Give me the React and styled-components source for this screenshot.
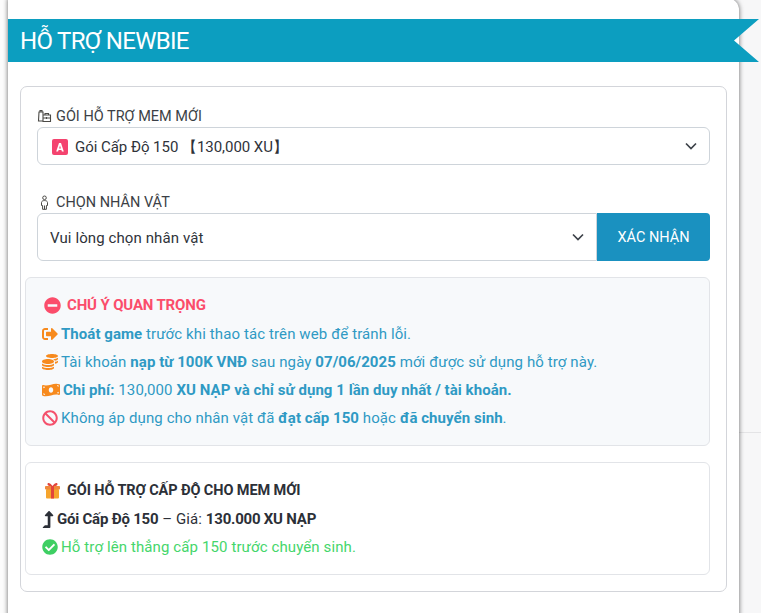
import React from "react";
import styled, { createGlobalStyle } from "styled-components";
import {
  FaSignOutAlt,
  FaCoins,
  FaMoneyBillWave,
  FaBan,
  FaMinusCircle,
  FaCheckCircle,
  FaLevelUpAlt,
} from "react-icons/fa";

const GlobalStyle = createGlobalStyle`
  html, body {
    margin: 0;
    height: 100%;
    overflow: hidden;
    font-family: "Roboto", "Liberation Sans", sans-serif;
    background:
      linear-gradient(to bottom, transparent 432px, #e4e4e6 432px, #e4e4e6 433px, transparent 433px) right top / 22px 100% no-repeat,
      linear-gradient(to right, #fcfcfc 8px, #f7f7f8 8px);
  }
`;

const Panel = styled.div`
  width: 731px;
  height: 640px;
  margin: -2px 0 0 8px;
  padding-top: 21px;
  box-sizing: border-box;
  background: #fff;
  border-radius: 0 12px 0 0;
  box-shadow: 0 0 5px rgba(0, 0, 0, 0.6);
`;

const Ribbon = styled.div`
  width: 751px;
  height: 43px;
  padding-left: 12px;
  box-sizing: border-box;
  display: flex;
  align-items: center;
  background: #0c9ec0;
  color: #fff;
  font-size: 24px;
  letter-spacing: -0.7px;
  clip-path: polygon(0 0, 100% 0, 726px 50%, 100% 100%, 0 100%);
`;

const Card = styled.div`
  margin: 24px 12px 0;
  height: 506px;
  box-sizing: border-box;
  padding: 19px 16px 0 4px;
  border: 1px solid #d3d5da;
  border-radius: 7px;
`;

const Label = styled.div`
  display: flex;
  align-items: center;
  gap: 4px;
  height: 20px;
  margin-left: 12px;
  margin-bottom: 1px;
  color: #3b3f46;
  font-size: 14.5px;
`;

const Select = styled.div`
  flex: 1;
  display: flex;
  align-items: center;
  height: ${(p) => p.$h}px;
  margin-left: 12px;
  padding: 0 12px;
  box-sizing: border-box;
  background: #fff;
  border: 1px solid #ced4da;
  border-radius: ${(p) => (p.$joined ? "6px 0 0 6px" : "6px")};
  color: #2f333a;
  font-size: 15px;
`;

const SelectText = styled.span`
  flex: 1;
  display: flex;
  align-items: center;
  gap: 7px;
  padding-top: 2px;
  margin-left: ${(p) => p.$ml || 0}px;
  letter-spacing: ${(p) => p.$ls || 0}px;
`;

const Row = styled.div`
  display: flex;
  margin-bottom: ${(p) => p.$mb || 0}px;
`;

const Confirm = styled.button`
  width: 113px;
  height: 48px;
  border: 0;
  border-radius: 0 4px 4px 0;
  background: #1a91c0;
  color: #fff;
  font-family: inherit;
  font-size: 14.5px;
`;

const Notice = styled.div`
  height: 169px;
  box-sizing: border-box;
  padding: 17px 18px 0;
  background: #f7f9fb;
  border: 1px solid #e2e4e8;
  border-radius: 6px;
`;

const NoticeTitle = styled.div`
  display: flex;
  align-items: center;
  gap: 6px;
  height: 20px;
  margin-bottom: 5px;
  color: #fb4d6b;
  font-size: 15px;
  font-weight: 700;
  letter-spacing: -0.15px;
`;

const Line = styled.div`
  display: flex;
  align-items: center;
  gap: 3px;
  height: 28px;
  margin-left: -2px;
  color: ${(p) => p.$color || "#2f9ac4"};
  font-size: 15px;
  letter-spacing: 0.11px;
  white-space: pre;

  b {
    font-weight: 700;
    color: inherit;
    letter-spacing: ${(p) => (p.$tight ? "-0.22px" : "0.05px")};
  }
`;

const Plan = styled.div`
  height: 113px;
  margin-top: 16px;
  box-sizing: border-box;
  padding: 17px 18px 0;
  border: 1px solid #e2e4e8;
  border-radius: 6px;
`;

const PlanTitle = styled.div`
  display: flex;
  align-items: center;
  gap: 6px;
  height: 20px;
  margin-bottom: 5px;
  color: #2c3038;
  font-size: 14.5px;
  font-weight: 700;
  letter-spacing: -0.1px;
`;

const LevelUp = styled(FaLevelUpAlt)`
  width: 12px;
  height: 17px;
  color: #2c3038;
`;

const Chevron = () => (
  <svg width="12" height="8" viewBox="0 0 12 8" fill="none" stroke="#3d4249" strokeWidth="1.7">
    <path d="M1 1.5l5 5 5-5" />
  </svg>
);

const BagsIcon = () => (
  <svg width="15" height="14" viewBox="0 0 15 14" fill="none" stroke="#4b4a46" strokeWidth="1.1">
    <path d="M2 3h4v9H1.500zM6 6h7.500v6.500H6zM3 3V1.500h2V3M8 6V4.500h3.500V6" />
    <path d="M6 9h7.500M9.500 8v2" />
  </svg>
);

const PersonIcon = () => (
  <svg width="15" height="15" viewBox="0 0 15 15" fill="none" stroke="#4b4a46" strokeWidth="1">
    <circle cx="7.500" cy="2.800" r="1.800" />
    <path d="M4.500 7.500c0-2.600 6-2.600 6 0v3h-1.100v3.800H5.600v-3.800H4.500zM7.500 10.500v3.800" />
  </svg>
);

const LetterA = () => (
  <svg width="16" height="16" viewBox="0 0 16 16">
    <rect x="0" y="0" width="16" height="16" rx="2" fill="#f4436f" />
    <path d="M4.200 12.500L7 4h2l2.800 8.500h-1.900L9.400 11H6.600l-.5 1.500zM7.100 9.500h1.800L8 6.500z" fill="#fff" />
  </svg>
);

const GiftIcon = () => (
  <svg width="17" height="17" viewBox="0 0 17 17">
    <path d="M8.500 4C6 0 3 .5 3.500 2.500S7 4 8.500 4zM8.500 4c2.500-4 5.500-3.500 5-1.500S10 4 8.500 4z" fill="#e2453c" />
    <rect x="2" y="7" width="13" height="9.500" rx="1" fill="#f6a52d" />
    <rect x="1" y="4" width="15" height="3.500" rx=".8" fill="#f0883a" />
    <rect x="7" y="4" width="3" height="12.500" fill="#e2453c" />
  </svg>
);

export default function App() {
  return (
    <>
      <GlobalStyle />
      <Panel>
        <Ribbon>HỖ TRỢ NEWBIE</Ribbon>
        <Card>
          <Label>
            <BagsIcon /> GÓI HỖ TRỢ MEM MỚI
          </Label>
          <Row $mb={27}>
            <Select $h={38}>
              <SelectText $ml={2} $ls={-0.04}>
                <LetterA /> Gói Cấp Độ 150 【130,000 XU】
              </SelectText>
              <Chevron />
            </Select>
          </Row>
          <Label>
            <PersonIcon /> CHỌN NHÂN VẬT
          </Label>
          <Row $mb={16}>
            <Select $h={48} $joined>
              <SelectText $ls={0.1}>Vui lòng chọn nhân vật</SelectText>
              <Chevron />
            </Select>
            <Confirm>XÁC NHẬN</Confirm>
          </Row>
          <Notice>
            <NoticeTitle>
              <FaMinusCircle size={17} color="#fb4d6b" /> CHÚ Ý QUAN TRỌNG
            </NoticeTitle>
            <Line>
              <FaSignOutAlt size={16} color="#f78a1d" />
              <span>
                <b>Thoát game</b> trước khi thao tác trên web để tránh lỗi.
              </span>
            </Line>
            <Line>
              <FaCoins size={16} color="#f78a1d" />
              <span>
                Tài khoản <b>nạp từ 100K VNĐ</b> sau ngày <b>07/06/2025</b> mới được sử dụng hỗ trợ này.
              </span>
            </Line>
            <Line>
              <FaMoneyBillWave size={18} color="#f78a1d" />
              <span>
                <b>Chi phí:</b> 130,000 <b>XU NẠP và chỉ sử dụng 1 lần duy nhất / tài khoản.</b>
              </span>
            </Line>
            <Line>
              <FaBan size={16} color="#f4516c" />
              <span>
                Không áp dụng cho nhân vật đã <b>đạt cấp 150</b> hoặc <b>đã chuyển sinh</b>.
              </span>
            </Line>
          </Notice>
          <Plan>
            <PlanTitle>
              <GiftIcon /> GÓI HỖ TRỢ CẤP ĐỘ CHO MEM MỚI
            </PlanTitle>
            <Line $color="#2c3038" $tight>
              <LevelUp />
              <span>
                <b>Gói Cấp Độ 150</b> – Giá: <b>130.000 XU NẠP</b>
              </span>
            </Line>
            <Line $color="#45d66b">
              <FaCheckCircle size={16} color="#3ecf63" />
              <span>Hỗ trợ lên thẳng cấp 150 trước chuyển sinh.</span>
            </Line>
          </Plan>
        </Card>
      </Panel>
    </>
  );
}
